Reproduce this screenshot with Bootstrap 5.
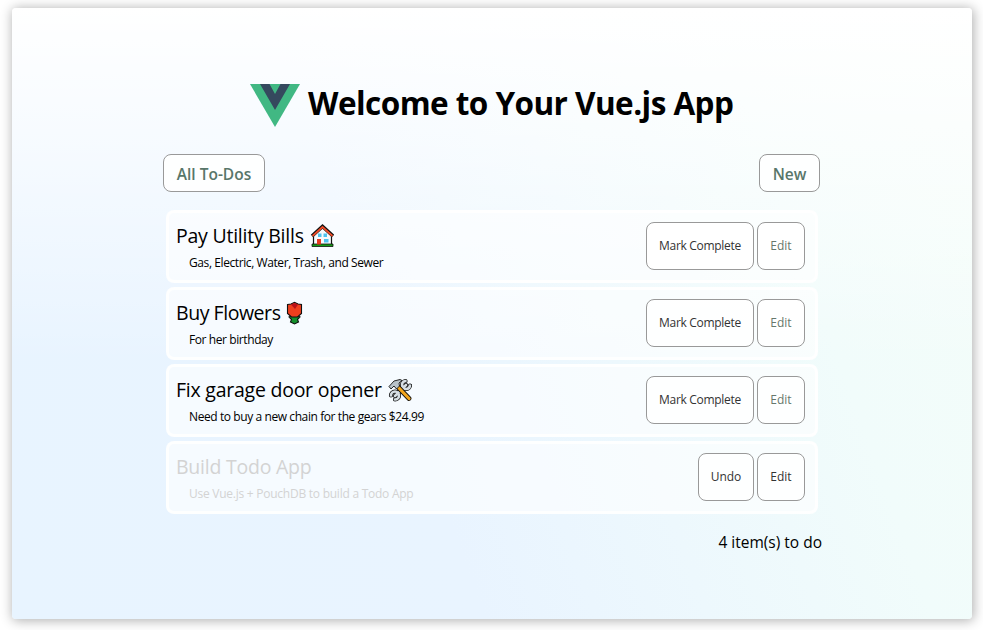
<!DOCTYPE html>
<html lang="en">
<head>
<meta charset="utf-8">
<meta name="viewport" content="width=device-width, initial-scale=1">
<title>Todo App</title>
<link href="https://cdn.jsdelivr.net/npm/bootstrap@5.3.0/dist/css/bootstrap.min.css" rel="stylesheet">
<style>
body{font-family:"Open Sans","Noto Sans",sans-serif;color:#000;background:#fff;height:630px;padding:8px 11px 11px 12px;overflow:hidden}
.panel{height:611px;border-radius:4px;padding-top:75px;box-shadow:1px 1px 12px 1px rgba(0,0,0,.3);
background:linear-gradient(180deg,#fff 0%,rgba(255,255,255,0) 58%),linear-gradient(70deg,#e8f4ff 0%,#e9f4ff 40%,#f1fcfb 78%,#f4fdf9 100%)}
.brand{height:46px;margin-left:238px}
.brand svg{width:50px;height:43px;margin-top:1px}
.brand h1{font-size:31.5px;font-weight:700;line-height:38px;margin:1px 0 0 8px;letter-spacing:-.55px;white-space:nowrap}
.bar{width:657px;margin:25px 0 0 151px}
.btn-box{background:rgba(255,255,255,.85);border:1px solid #999;border-radius:8px;padding:0;white-space:nowrap}
.btn-nav{height:38px;font-size:15.5px;font-weight:600;color:#58766a;padding-top:3px}
.nav-all{width:102px}
.nav-new{width:61px}
.todos{width:652px;margin:18px 0 0 154px;gap:4px}
.todo{height:73px;border:3px solid rgba(255,255,255,.85);border-radius:8px;background:rgba(255,255,255,.6);padding:0 10px 0 7px}
.todo h2{font-size:19.5px;font-weight:400;line-height:26px;margin:10px 0 0;letter-spacing:-.24px;white-space:nowrap}
.todo p{font-size:12px;line-height:16px;margin:6px 0 0 13px;letter-spacing:-.41px;white-space:nowrap}
.todo h2 svg{width:24px;height:24px;display:block;margin:1px 0 0 6px}
.todo h2 .rose{margin-left:5px}
.acts{gap:3px;height:66px}
.btn-act{height:48px;font-size:12px;color:#333}
.done h2,.done p{color:#d3d3d3}
.done p{letter-spacing:-.25px}
.tight{letter-spacing:-.45px}
.wide{width:108px;letter-spacing:-.3px}.mid{width:56px}.sq{width:48px}
.soft{color:#66776c}
.total{width:657px;margin:16px 0 0 153px;font-size:15.5px;line-height:24px}
</style>
</head>
<body>
<main class="panel">
<header class="brand d-flex align-items-start">
<svg viewBox="0 0 50 43" preserveAspectRatio="none" aria-hidden="true"><path fill="#41b883" d="M0 0h50L25 43z"/><path fill="#35495e" d="M10 0h9.500L25 10 30.500 0H40L25 26z"/></svg>
<h1>Welcome to Your Vue.js App</h1>
</header>
<div class="bar d-flex justify-content-between">
<button class="btn btn-box btn-nav nav-all">All To-Dos</button>
<button class="btn btn-box btn-nav nav-new">New</button>
</div>
<section class="todos d-flex flex-column">
<article class="todo d-flex justify-content-between">
<div><h2 class="d-flex"><span>Pay Utility Bills</span>
<svg viewBox="0 0 24 24" aria-hidden="true"><path fill="#f7fafc" stroke="#111" stroke-width="1.200" d="M3.500 11v10h18V11l-9-8z"/><path fill="none" stroke="#111" stroke-width="3.600" d="M2 12 12.500 2.500 23 12"/><path fill="none" stroke="#f04c28" stroke-width="1.700" d="M2.500 12 12.500 3 22.500 12"/><path fill="#159a14" stroke="#111" stroke-width=".8" d="M2 20h21v2.500H2z"/><path fill="#4fc3ee" d="M8 9.500h3.500v3.500H8zm5.500 0H17v3.500h-3.500zm.5 5.500h4.500v3.500H14z"/><path fill="#e53920" d="M7 15h4v5.500H7z"/></svg></h2>
<p>Gas, Electric, Water, Trash, and Sewer</p></div>
<div class="acts d-flex align-items-center"><button class="btn btn-box btn-act wide">Mark Complete</button><button class="btn btn-box btn-act sq soft">Edit</button></div>
</article>
<article class="todo d-flex justify-content-between">
<div><h2 class="d-flex"><span class="tight">Buy Flowers</span>
<svg class="rose" viewBox="0 0 24 24" aria-hidden="true"><path fill="#14902c" stroke="#111" stroke-width="1.100" d="M4 16 7 14.500h5L15 16l-2.500 2.500 1 2.500-4 2-4-2 1-2.500z"/><path fill="#ef3f1e" stroke="#111" stroke-width="1.100" d="M2.500 3.500 6 3l3.500-1.700L13 3l3.500.5v9L12.500 16h-6L2.500 12.500z"/><path fill="#b91018" d="M6 3.500 9.500 2 13 3.500l-3 4.500z"/></svg></h2>
<p>For her birthday</p></div>
<div class="acts d-flex align-items-center"><button class="btn btn-box btn-act wide">Mark Complete</button><button class="btn btn-box btn-act sq soft">Edit</button></div>
</article>
<article class="todo d-flex justify-content-between">
<div><h2 class="d-flex"><span>Fix garage door opener</span>
<svg viewBox="0 0 24 24" aria-hidden="true"><g stroke-linecap="round" fill="none"><path stroke="#111" stroke-width="4.200" d="M7 18 18 7"/><path stroke="#111" stroke-width="4.200" d="M22 7.500A4 4 0 1 1 17.500 3M3 17.500A4 4 0 1 1 7 21.500"/><path stroke="#d5dde3" stroke-width="2.600" d="M7 18 18 7M22 7.500A4 4 0 1 1 17.500 3M3 17.500A4 4 0 1 1 7 21.500"/><path stroke="#111" stroke-width="4.800" d="m10 9 11 11.500"/><path stroke="#f3a51c" stroke-width="3.200" d="m10 9 11 11.500"/></g><path fill="#b9c3c9" stroke="#111" stroke-width=".9" d="M1 8.500 6 3l6-1.500 2 1-3 2.500.5 3-3 3L6 8l-3 3z"/></svg></h2>
<p>Need to buy a new chain for the gears $24.99</p></div>
<div class="acts d-flex align-items-center"><button class="btn btn-box btn-act wide">Mark Complete</button><button class="btn btn-box btn-act sq soft">Edit</button></div>
</article>
<article class="todo done d-flex justify-content-between">
<div><h2>Build Todo App</h2>
<p>Use Vue.js + PouchDB to build a Todo App</p></div>
<div class="acts d-flex align-items-center"><button class="btn btn-box btn-act mid">Undo</button><button class="btn btn-box btn-act sq">Edit</button></div>
</article>
</section>
<div class="total text-end">4 item(s) to do</div>
</main>
<script src="https://cdn.jsdelivr.net/npm/bootstrap@5.3.0/dist/js/bootstrap.bundle.min.js"></script>
</body>
</html>
